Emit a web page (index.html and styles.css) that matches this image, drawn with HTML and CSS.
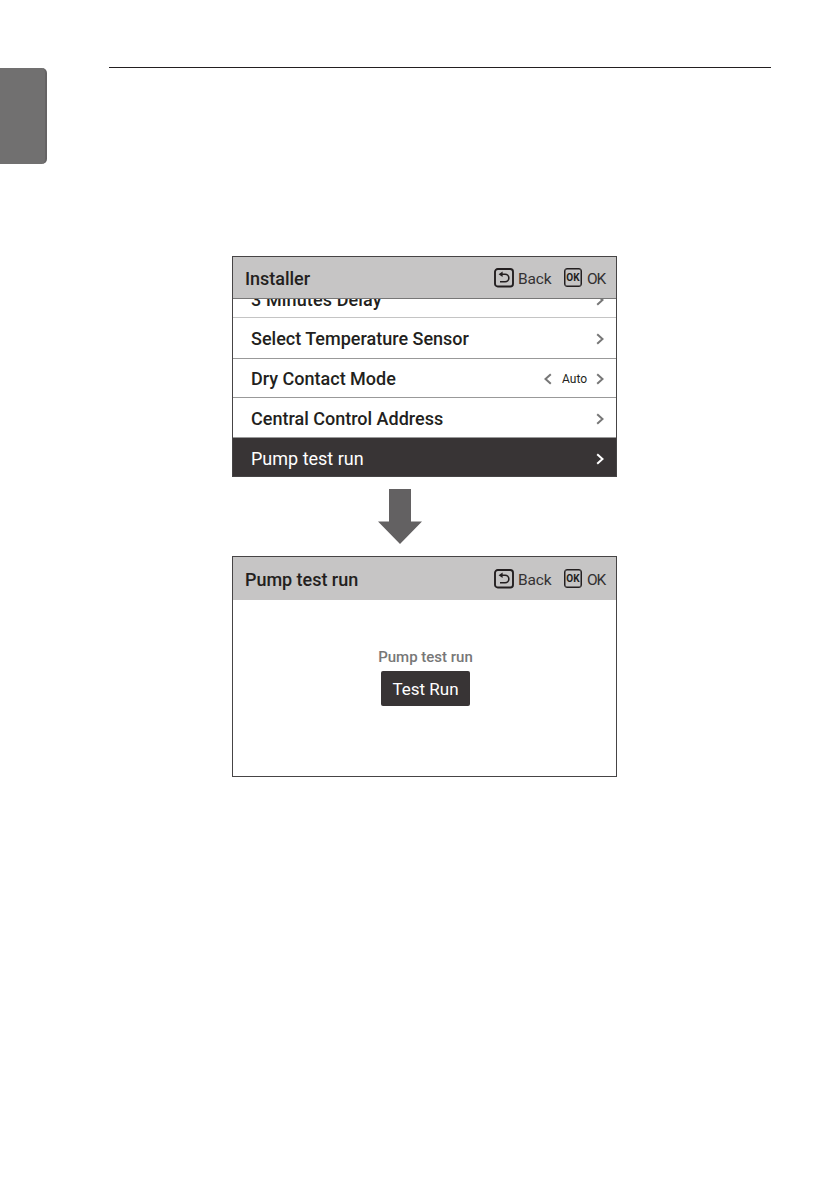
FILE: index.html
```
<!DOCTYPE html>
<html lang="en">
<head>
<meta charset="utf-8">
<title>Pump test run</title>
<link rel="stylesheet" href="styles.css">
</head>
<body>
<svg class="defs" width="0" height="0">
  <symbol id="back" viewBox="0 0 20 20"><rect x="1" y="1" width="18" height="17.5" rx="2.8" fill="none" stroke="#231f20" stroke-width="1.9"/><path d="M6.5 6.2h4.6a3.7 3.7 0 0 1 0 7.5H6" fill="none" stroke="#231f20" stroke-width="1.6"/><path d="M4.6 6.2 8.6 3.4v5.6z" fill="#231f20"/></symbol>
  <symbol id="next" viewBox="0 0 8 12"><path d="M1.2 1.2 6.5 6l-5.3 4.8" fill="none" stroke="currentColor" stroke-width="2"/></symbol>
</svg>
<div class="page">
  <aside class="tab"></aside>
  <main class="content">
    <section class="screen">
      <header class="bar lined">
        <h1 class="title">Installer</h1>
        <svg class="back-icon"><use href="#back"/></svg><span class="back">Back</span>
        <span class="key">OK</span><span class="ok">OK</span>
      </header>
      <div class="row clipped"><span class="t-delay">3 Minutes Delay</span><svg class="chev"><use href="#next"/></svg></div>
      <div class="row r-select"><span>Select Temperature Sensor</span><svg class="chev"><use href="#next"/></svg></div>
      <div class="row r-dry"><span>Dry Contact Mode</span><svg class="chev prev"><use href="#next"/></svg><span class="auto">Auto</span><svg class="chev"><use href="#next"/></svg></div>
      <div class="row r-central"><span>Central Control Address</span><svg class="chev"><use href="#next"/></svg></div>
      <div class="row active"><span>Pump test run</span><svg class="chev"><use href="#next"/></svg></div>
    </section>
    <svg class="arrow" viewBox="0 0 46 55"><path d="M12 0h22v32.5h11L23 55 1 32.5h11z" fill="#636162"/></svg>
    <section class="screen">
      <header class="bar">
        <h1 class="title">Pump test run</h1>
        <svg class="back-icon"><use href="#back"/></svg><span class="back">Back</span>
        <span class="key">OK</span><span class="ok">OK</span>
      </header>
      <div class="panel">
        <span class="label">Pump test run</span>
        <button class="run">Test Run</button>
      </div>
    </section>
  </main>
</div>
</body>
</html>
```
FILE: styles.css
```
* { box-sizing: border-box; }
body { margin: 0; background: #fff; color: #231f20; font-family: Roboto, "Liberation Sans", sans-serif; }
.defs { display: block; }
.page { display: flex; align-items: flex-start; height: 1191px; padding-top: 67px; }
.tab { width: 47px; height: 96px; margin-top: 1px; background: #717070; border-radius: 0 5px 5px 0; border-right: 2px solid #656364; }
.content { width: 662px; margin-left: 62px; padding: 188px 0 0 123px; border-top: 1px solid #231f20; }
.screen { width: 385px; height: 221px; border: 1px solid #464445; overflow: hidden; }
.bar { display: flex; align-items: center; height: 43px; padding: 0 10px 0 12px; background: #c6c5c5; line-height: 20px; white-space: nowrap; }
.lined { height: 42px; border-bottom: 1px solid #777; }
.title { margin: 0 auto 0 0; padding-top: 3px; font-size: 18px; font-weight: 500; line-height: 20px; letter-spacing: -.03px; }
.back-icon { width: 20px; height: 20px; }
.back { width: 34px; margin-left: 4px; padding-top: 3px; font-size: 15.5px; color: #343132; letter-spacing: -.15px; }
.key { width: 18px; height: 19px; margin-left: 12px; border: 1px solid #231f20; box-shadow: inset 0 0 0 .5px #231f20; border-radius: 3px; font-size: 10px; font-weight: 700; line-height: 18px; text-align: center; }
.ok { width: 19px; margin-left: 5px; padding-top: 3px; font-size: 15.5px; color: #343132; letter-spacing: -1.2px; }
.row { display: flex; align-items: center; height: 40px; padding: 2px 12px 0 18px; border-bottom: 1px solid #999; font-size: 18px; font-weight: 500; line-height: 20px; white-space: nowrap; }
.row > span:first-child { margin-right: auto; }
.clipped { height: 19px; align-items: flex-end; padding-bottom: 7px; overflow: hidden; border-color: #c4c4c4; }
.t-delay { letter-spacing: .12px; }
.clipped .chev { margin-bottom: 4px; }
.r-select { height: 41px; }
.r-dry { height: 39px; }
.chev { width: 8px; height: 12px; color: #777; flex: none; }
.prev { transform: scaleX(-1); }
.auto { width: 26px; margin: 0 8px 0 10px; font-size: 12px; font-weight: 400; }
.active { background: #383435; color: #fff; font-weight: 400; }
.active .chev { color: #fff; }
.arrow { display: block; width: 46px; height: 55px; margin: 12px 0 12px 145px; }
.panel { display: flex; flex-direction: column; align-items: center; padding: 47px 0 0 2px; }
.label { color: #777; font-size: 15px; font-weight: 500; line-height: 20px; }
.run { width: 89px; height: 35px; margin-top: 4px; border: 0; border-radius: 2px; background: #383435; color: #fff; font: 400 17px Roboto, sans-serif; white-space: nowrap; }
```
